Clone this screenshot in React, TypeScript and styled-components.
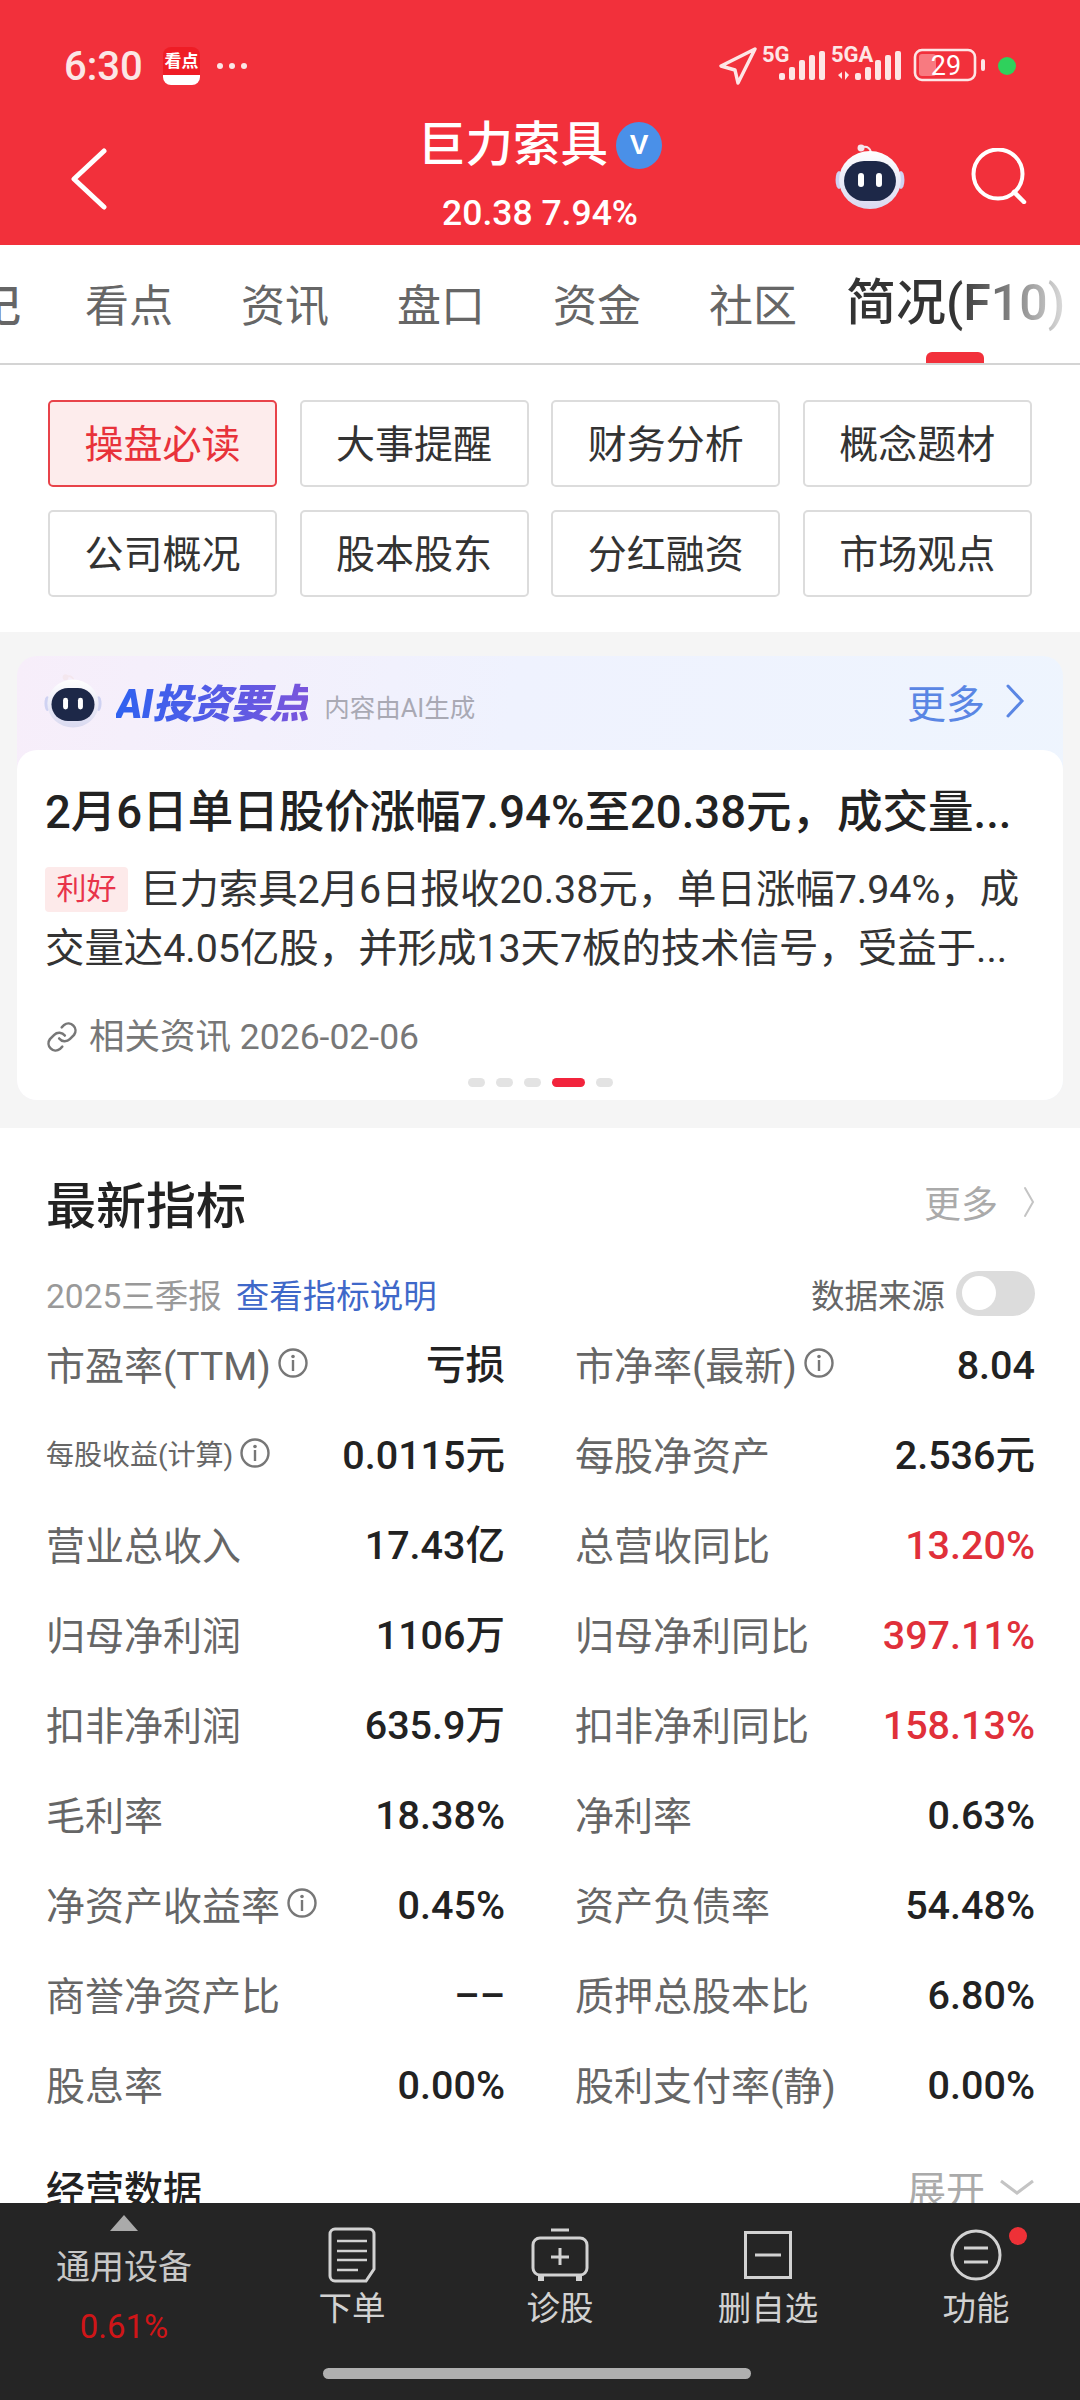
import React from "react";
import styled, { createGlobalStyle } from "styled-components";

const Global = createGlobalStyle`
  html, body { margin: 0; padding: 0; background: #fff; }
  body { font-family: Roboto, "Noto Sans CJK SC", sans-serif; }
  * { box-sizing: border-box; }
`;

const Page = styled.div`
  width: 1080px;
  height: 2400px;
  display: flex;
  flex-direction: column;
  overflow: hidden;
  background: #fff;
`;
const Header = styled.header`
  height: 245px;
  background: #f2303b;
  color: #fff;
  flex: none;
`;
const StatusBar = styled.div`
  height: 112px;
  padding: 20px 64px 0 64px;
  display: flex;
  align-items: center;
`;
const Time = styled.span`
  font-size: 40px;
  font-weight: 500;
  color: #fbe6e6;
  width: 99px;
`;
const AppBadge = styled.div`
  width: 37px;
  height: 38px;
  border-radius: 8px;
  background: linear-gradient(#ef1c25 74%, #fff 74%);
  color: #fff;
  font-size: 17px;
  font-weight: 700;
  line-height: 28px;
  text-align: center;
  overflow: hidden;
`;
const Dots = styled.span`
  margin-left: 17px;
  display: flex;
  gap: 6px;
  i { width: 6px; height: 6px; border-radius: 50%; background: #fbe6e6; display: block; }
`;
const StatusRight = styled.div`
  margin-left: auto;
  margin-right: -3px;
  display: flex;
  align-items: center;
`;
const Nav = styled.div`
  height: 133px;
  display: grid;
  grid-template-columns: 300px 1fr 300px;
  align-items: center;
`;
const BackBtn = styled.div`
  padding-left: 70px;
  display: flex;
`;
const TitleBlock = styled.div`
  display: flex;
  flex-direction: column;
  align-items: center;
  padding-top: 8px;
  height: 133px;
`;
const TitleRow = styled.div`
  height: 50px;
  display: flex;
  align-items: center;
  gap: 8px;
`;
const TitleText = styled.span`
  font-size: 47.5px;
  font-weight: 500;
  line-height: 50px;
`;
const VBadge = styled.span`
  width: 46px;
  height: 47px;
  border-radius: 50%;
  background: #4a90e8;
  color: #fff;
  font-size: 28px;
  font-weight: 900;
  text-align: center;
  line-height: 45px;
  font-family: "Liberation Sans", sans-serif;
`;
const SubTitle = styled.div`
  margin-top: 23px;
  font-size: 35.5px;
  font-weight: 500;
  line-height: 40px;
  color: #fff;
`;
const NavRight = styled.div`
  display: flex;
  justify-content: flex-end;
  align-items: center;
  padding: 0 50px 4px 0;
  gap: 65px;
`;
const Tabs = styled.nav`
  height: 120px;
  flex: none;
  border-bottom: 2px solid #d4d4d4;
  display: flex;
  align-items: center;
  overflow: hidden;
  padding-bottom: 2px;
`;
const TabItem = styled.span`
  flex: none;
  width: 88px;
  margin-right: 68px;
  font-size: 44px;
  color: #666;
  white-space: nowrap;
`;
const ClippedTab = styled(TabItem)`
  margin-left: -67px;
  margin-right: 64px;
  font-weight: 500;
`;
const ActiveTab = styled.span`
  flex: none;
  position: relative;
  margin-left: -19px;
  font-size: 50px;
  font-weight: 500;
  white-space: nowrap;
  line-height: 70px;
`;
const ActiveText = styled.span`
  background: linear-gradient(90deg, #333 50%, #999 82%, #ddd 100%);
  -webkit-background-clip: text;
  background-clip: text;
  color: transparent;
`;
const Indicator = styled.i`
  position: absolute;
  left: 80px;
  top: 84px;
  width: 58px;
  height: 11px;
  border-radius: 6px 6px 0 0;
  background: #f2303b;
`;
const Chips = styled.div`
  flex: none;
  display: grid;
  grid-template-columns: repeat(4, 229px);
  gap: 23px 22.6px;
  padding: 35px 0 35px 48px;
`;
const Chip = styled.div<{ $active?: boolean }>`
  height: 87px;
  border: 2px solid ${(p) => (p.$active ? "#e8434a" : "#dcdcdc")};
  border-radius: 5px;
  background: ${(p) => (p.$active ? "#fdecec" : "#fff")};
  color: ${(p) => (p.$active ? "#e8323a" : "#333")};
  font-size: 39px;
  padding-bottom: 5px;
  display: flex;
  align-items: center;
  justify-content: center;
`;
const Band = styled.section`
  flex: none;
  height: 496px;
  background: #f5f5f5;
  padding: 24px 17px 0;
`;
const AiCard = styled.div`
  height: 444px;
  border-radius: 20px;
  background: linear-gradient(100deg, #f7eefa 0%, #eff2fe 45%, #eef5fe 100%);
  display: flex;
  flex-direction: column;
`;
const AiHead = styled.div`
  height: 94px;
  flex: none;
  padding: 0 38px 4px 27px;
  display: flex;
  align-items: center;
`;
const AiTitle = styled.span`
  margin-left: 14px;
  font-size: 40px;
  font-weight: 900;
  font-style: italic;
  letter-spacing: -1px;
  background: linear-gradient(90deg, #2f62f0, #7a55dc);
  -webkit-background-clip: text;
  background-clip: text;
  color: transparent;
`;
const AiNote = styled.span`
  margin-left: 16px;
  margin-top: 8px;
  font-size: 25.5px;
  color: #a9a9b4;
`;
const AiMore = styled.span`
  margin-left: auto;
  font-size: 39px;
  color: #5a86e4;
  display: flex;
  align-items: center;
  gap: 20px;
`;
const AiBody = styled.div`
  flex: 1;
  background: #fff;
  border-radius: 20px;
  padding: 33px 28px 0;
  display: flex;
  flex-direction: column;
`;
const AiHeadline = styled.div`
  font-size: 45.5px;
  font-weight: 500;
  line-height: 60px;
  color: #222;
  white-space: nowrap;
`;
const AiLine = styled.div`
  font-size: 39.4px;
  line-height: 59px;
  color: #333;
  white-space: nowrap;
  display: flex;
  align-items: center;
`;
const GoodTag = styled.span`
  flex: none;
  width: 83px;
  height: 45px;
  margin-right: 12px;
  border-radius: 4px;
  background: #fdeaea;
  color: #e8344a;
  font-size: 30px;
  line-height: 43px;
  text-align: center;
`;
const AiLines = styled.div`
  margin-top: 17px;
`;
const Related = styled.div`
  margin-top: 36px;
  font-size: 35.5px;
  line-height: 46px;
  color: #777;
  display: flex;
  align-items: center;
  gap: 10px;
`;
const Pager = styled.div`
  margin-top: 18px;
  display: flex;
  justify-content: center;
  gap: 11px;
`;
const PagerDot = styled.i<{ $on?: boolean }>`
  display: block;
  width: ${(p) => (p.$on ? 33 : 17)}px;
  height: 9px;
  border-radius: 5px;
  background: ${(p) => (p.$on ? "#f2243c" : "#e3e3e3")};
`;
const Main = styled.section`
  flex: 1;
  min-height: 0;
  overflow: hidden;
  padding: 44px 45px 0 46px;
`;
const SecHead = styled.div`
  height: 60px;
  display: flex;
  align-items: center;
  justify-content: space-between;
`;
const SecTitle = styled.h2`
  margin: 0;
  font-size: 50px;
  font-weight: 500;
  color: #222;
`;
const SecMore = styled.span`
  font-size: 37px;
  color: #aaa;
  display: flex;
  align-items: center;
  gap: 25px;
`;
const MetaRow = styled.div`
  margin-top: 38px;
  height: 46px;
  display: flex;
  align-items: center;
  font-size: 33.5px;
  color: #999;
`;
const MetaLink = styled.span`
  margin-left: 14px;
  color: #3f68c9;
`;
const MetaSource = styled.span`
  margin-left: auto;
  color: #666;
`;
const Toggle = styled.span`
  margin-left: 11px;
  width: 79px;
  height: 45px;
  border-radius: 23px;
  background: #dcdcdc;
  display: flex;
  align-items: center;
  padding-left: 6px;
  i { display: block; width: 34px; height: 34px; border-radius: 50%; background: #fff; }
`;
const Metrics = styled.div`
  margin-top: 2px;
  display: grid;
  grid-template-columns: 459px 460px;
  column-gap: 70px;
  grid-auto-rows: 90px;
`;
const Metric = styled.div`
  display: flex;
  align-items: center;
  justify-content: space-between;
`;
const MetricLabel = styled.span<{ $small?: boolean }>`
  display: flex;
  align-items: center;
  gap: 6px;
  font-size: ${(p) => (p.$small ? 28 : 39)}px;
  color: #666;
  white-space: nowrap;
`;
const MetricValue = styled.span<{ $red?: boolean }>`
  font-size: 39.5px;
  line-height: 50px;
  padding-top: 6px;
  font-weight: 500;
  color: ${(p) => (p.$red ? "#e0303a" : "#222")};
  white-space: nowrap;
`;
const NextHead = styled.div`
  margin-top: 34px;
  height: 50px;
  display: flex;
  align-items: center;
  justify-content: space-between;
`;
const NextTitle = styled.span`
  font-size: 39px;
  font-weight: 500;
  color: #222;
`;
const NextMore = styled.span`
  font-size: 39px;
  color: #aaa;
  display: flex;
  align-items: center;
  gap: 14px;
`;
const Bottom = styled.footer`
  height: 197px;
  flex: none;
  background: #252525;
  display: flex;
  flex-direction: column;
  align-items: center;
`;
const BottomGrid = styled.div`
  width: 100%;
  display: grid;
  grid-template-columns: 248px repeat(4, 208px);
  height: 165px;
`;
const StockCol = styled.div`
  display: flex;
  flex-direction: column;
  align-items: center;
  padding-top: 12px;
`;
const Triangle = styled.i`
  width: 0;
  height: 0;
  border-left: 14px solid transparent;
  border-right: 14px solid transparent;
  border-bottom: 16px solid #aaa;
`;
const StockName = styled.span`
  margin-top: 14px;
  font-size: 34px;
  line-height: 44px;
  color: #c8c8c8;
`;
const StockPct = styled.span`
  margin-top: 16px;
  font-size: 33px;
  line-height: 44px;
  color: #d01518;
`;
const Tool = styled.div`
  position: relative;
  display: flex;
  flex-direction: column;
  align-items: center;
  padding-top: 24px;
`;
const ToolIcon = styled.div`
  height: 56px;
  display: flex;
  align-items: center;
  justify-content: center;
`;
const ToolLabel = styled.span`
  margin-top: 5px;
  font-size: 33.5px;
  line-height: 42px;
  color: #d2d2d2;
`;
const RedDot = styled.i`
  position: absolute;
  left: 137px;
  top: 24px;
  width: 18px;
  height: 18px;
  border-radius: 50%;
  background: #ee3137;
`;
const HomeBar = styled.div`
  width: 428px;
  height: 11px;
  margin-right: 6px;
  border-radius: 6px;
  background: #b0b0b0;
`;

const Robot = ({ size, id }: { size: number; id: string }) => (
  <svg width={size} height={size * 0.97} viewBox="0 0 70 68">
    <defs>
      <linearGradient id={id} x1="0" y1="0" x2="0" y2="1">
        <stop offset="0" stopColor="#ffffff" />
        <stop offset="1" stopColor="#d9d9f0" />
      </linearGradient>
    </defs>
    <circle cx="26" cy="5" r="3.5" fill="#f4e7ee" />
    <path d="M28 4 C33 3 35 6 36 9" stroke="#f4e7ee" strokeWidth="2" fill="none" />
    <ellipse cx="4" cy="37" rx="3.5" ry="9" fill="#cfd2f2" />
    <ellipse cx="66" cy="37" rx="3.5" ry="9" fill="#cfd2f2" />
    <ellipse cx="35" cy="37" rx="31" ry="29" fill={`url(#${id})`} />
    <rect x="9" y="18" width="52" height="40" rx="20" fill="#1d2848" />
    <rect x="23" y="30" width="6" height="14" rx="3" fill="#fff" />
    <rect x="41" y="30" width="6" height="14" rx="3" fill="#fff" />
  </svg>
);

const Info = () => (
  <svg width="32" height="32" viewBox="0 0 32 32">
    <circle cx="16" cy="16" r="13.5" fill="none" stroke="#777" strokeWidth="2.4" />
    <circle cx="16" cy="9.5" r="1.8" fill="#777" />
    <rect x="14.8" y="13" width="2.4" height="11" fill="#777" />
  </svg>
);

const Chevron = ({ w, h, c, sw }: { w: number; h: number; c: string; sw: number }) => (
  <svg width={w} height={h} viewBox={`0 0 ${w} ${h}`}>
    <path d={`M${sw} ${sw} L${w - sw} ${h / 2} L${sw} ${h - sw}`} fill="none" stroke={c} strokeWidth={sw} strokeLinecap="round" />
  </svg>
);

const StatusIcons = () => (
  <svg width="300" height="68" viewBox="0 -8 300 68" fontFamily="Roboto, sans-serif">
    <path d="M36 9 L2 26 L16 30 L19 43 Z" fill="none" stroke="#fde6e6" strokeWidth="3.4" strokeLinejoin="round" />
    <text x="43" y="22" fontSize="22" fontWeight="700" fill="#fde6e6">5G</text>
    <g fill="#fde6e6">
      <rect x="60" y="33" width="6" height="7" rx="2" />
      <rect x="70" y="27" width="6" height="13" rx="2" />
      <rect x="80" y="20" width="6" height="20" rx="2" />
      <rect x="90" y="15" width="6" height="25" rx="2" />
      <rect x="100" y="11" width="6" height="29" rx="2" />
      <path d="M119 35 l4 -3 v7 z M126 31 l4 4 -4 5 z" />
      <rect x="136" y="33" width="6" height="7" rx="2" />
      <rect x="146" y="27" width="6" height="13" rx="2" />
      <rect x="156" y="20" width="6" height="20" rx="2" />
      <rect x="166" y="15" width="6" height="25" rx="2" />
      <rect x="176" y="11" width="6" height="29" rx="2" />
    </g>
    <text x="112" y="22" fontSize="22" fontWeight="700" fill="#fde6e6">5GA</text>
    <rect x="196" y="10" width="60" height="30" rx="7" fill="none" stroke="#fde6e6" strokeWidth="2.6" />
    <rect x="200" y="14" width="17" height="22" rx="3" fill="#f87a80" />
    <text x="227" y="35" fontSize="27" textAnchor="middle" fill="#fff">29</text>
    <rect x="262" y="19" width="4" height="12" rx="2" fill="#fde6e6" />
    <circle cx="288" cy="26" r="9" fill="#2fd15c" />
  </svg>
);

type Cell = { label: string; value: string; red?: boolean; info?: boolean; small?: boolean };
const cells: Cell[] = [
  { label: "市盈率(TTM)", value: "亏损", info: true },
  { label: "市净率(最新)", value: "8.04", info: true },
  { label: "每股收益(计算)", value: "0.0115元", info: true, small: true },
  { label: "每股净资产", value: "2.536元" },
  { label: "营业总收入", value: "17.43亿" },
  { label: "总营收同比", value: "13.20%", red: true },
  { label: "归母净利润", value: "1106万" },
  { label: "归母净利同比", value: "397.11%", red: true },
  { label: "扣非净利润", value: "635.9万" },
  { label: "扣非净利同比", value: "158.13%", red: true },
  { label: "毛利率", value: "18.38%" },
  { label: "净利率", value: "0.63%" },
  { label: "净资产收益率", value: "0.45%", info: true },
  { label: "资产负债率", value: "54.48%" },
  { label: "商誉净资产比", value: "––" },
  { label: "质押总股本比", value: "6.80%" },
  { label: "股息率", value: "0.00%" },
  { label: "股利支付率(静)", value: "0.00%" },
];

const chips = ["操盘必读", "大事提醒", "财务分析", "概念题材", "公司概况", "股本股东", "分红融资", "市场观点"];
const tabs = ["看点", "资讯", "盘口", "资金", "社区"];

export default function App() {
  return (
    <Page>
      <Global />
      <Header>
        <StatusBar>
          <Time>6:30</Time>
          <AppBadge>看点</AppBadge>
          <Dots><i /><i /><i /></Dots>
          <StatusRight><StatusIcons /></StatusRight>
        </StatusBar>
        <Nav>
          <BackBtn>
            <svg width="38" height="62" viewBox="0 0 38 62">
              <path d="M34 3 L4 31 L34 59" fill="none" stroke="#fff" strokeWidth="5" strokeLinecap="round" strokeLinejoin="round" />
            </svg>
          </BackBtn>
          <TitleBlock>
            <TitleRow>
              <TitleText>巨力索具</TitleText>
              <VBadge>V</VBadge>
            </TitleRow>
            <SubTitle>20.38 7.94%</SubTitle>
          </TitleBlock>
          <NavRight>
            <Robot size={70} id="robot-nav" />
            <svg width="60" height="56" viewBox="0 0 60 56">
              <circle cx="28" cy="26" r="24.5" fill="none" stroke="#fff" strokeWidth="4" />
              <path d="M44 44 L54 54" stroke="#fff" strokeWidth="4.5" strokeLinecap="round" />
            </svg>
          </NavRight>
        </Nav>
      </Header>

      <Tabs>
        <ClippedTab>笔记</ClippedTab>
        {tabs.map((t) => <TabItem key={t}>{t}</TabItem>)}
        <ActiveTab><ActiveText>简况(F10)</ActiveText><Indicator /></ActiveTab>
      </Tabs>

      <Chips>
        {chips.map((c, i) => <Chip key={c} $active={i === 0}>{c}</Chip>)}
      </Chips>

      <Band>
        <AiCard>
          <AiHead>
            <Robot size={58} id="robot-card" />
            <AiTitle>AI投资要点</AiTitle>
            <AiNote>内容由AI生成</AiNote>
            <AiMore>更多<Chevron w={20} h={36} c="#5a86e4" sw={3} /></AiMore>
          </AiHead>
          <AiBody>
            <AiHeadline>2月6日单日股价涨幅7.94%至20.38元，成交量...</AiHeadline>
            <AiLines>
              <AiLine><GoodTag>利好</GoodTag>巨力索具2月6日报收20.38元，单日涨幅7.94%，成</AiLine>
              <AiLine>交量达4.05亿股，并形成13天7板的技术信号，受益于...</AiLine>
            </AiLines>
            <Related>
              <svg width="34" height="34" viewBox="0 0 24 24" fill="none" stroke="#777" strokeWidth="1.8" strokeLinecap="round">
                <path d="M10 13a5 5 0 0 0 7.5.5l3-3a5 5 0 0 0-7-7l-1.7 1.7" />
                <path d="M14 11a5 5 0 0 0-7.5-.5l-3 3a5 5 0 0 0 7 7l1.7-1.7" />
              </svg>
              相关资讯 2026-02-06
            </Related>
            <Pager>
              <PagerDot /><PagerDot /><PagerDot /><PagerDot $on /><PagerDot />
            </Pager>
          </AiBody>
        </AiCard>
      </Band>

      <Main>
        <SecHead>
          <SecTitle>最新指标</SecTitle>
          <SecMore>更多<Chevron w={12} h={32} c="#c4c4c4" sw={2} /></SecMore>
        </SecHead>
        <MetaRow>
          2025三季报
          <MetaLink>查看指标说明</MetaLink>
          <MetaSource>数据来源</MetaSource>
          <Toggle><i /></Toggle>
        </MetaRow>
        <Metrics>
          {cells.map((c) => (
            <Metric key={c.label}>
              <MetricLabel $small={c.small}>{c.label}{c.info && <Info />}</MetricLabel>
              <MetricValue $red={c.red}>{c.value}</MetricValue>
            </Metric>
          ))}
        </Metrics>
        <NextHead>
          <NextTitle>经营数据</NextTitle>
          <NextMore>
            展开
            <svg width="36" height="16" viewBox="0 0 36 16">
              <path d="M2 2 L18 14 L34 2" fill="none" stroke="#c4c4c4" strokeWidth="3" />
            </svg>
          </NextMore>
        </NextHead>
      </Main>

      <Bottom>
        <BottomGrid>
          <StockCol>
            <Triangle />
            <StockName>通用设备</StockName>
            <StockPct>0.61%</StockPct>
          </StockCol>
          <Tool>
            <ToolIcon>
              <svg width="48" height="56" viewBox="0 0 48 56" fill="none" stroke="#d2d2d2" strokeWidth="3">
                <path d="M7 2 H41 A5 5 0 0 1 46 7 V42 L38 54 H7 A5 5 0 0 1 2 49 V7 A5 5 0 0 1 7 2 Z" />
                <path d="M9 14 H39 M9 24 H39 M9 33 H39 M9 43 H30" strokeWidth="2.6" />
              </svg>
            </ToolIcon>
            <ToolLabel>下单</ToolLabel>
          </Tool>
          <Tool>
            <ToolIcon>
              <svg width="58" height="54" viewBox="0 0 58 54" fill="none" stroke="#d2d2d2" strokeWidth="3">
                <path d="M20 2 H38" />
                <rect x="2" y="10" width="54" height="37" rx="7" />
                <path d="M29 20 V37 M20 29 H38" />
                <path d="M10 48 V53 M48 48 V53" strokeWidth="6" />
              </svg>
            </ToolIcon>
            <ToolLabel>诊股</ToolLabel>
          </Tool>
          <Tool>
            <ToolIcon>
              <svg width="48" height="48" viewBox="0 0 48 48" fill="none" stroke="#d2d2d2" strokeWidth="3">
                <rect x="1.5" y="1.5" width="45" height="45" />
                <path d="M11 24 H37" />
              </svg>
            </ToolIcon>
            <ToolLabel>删自选</ToolLabel>
          </Tool>
          <Tool>
            <ToolIcon>
              <svg width="52" height="52" viewBox="0 0 52 52" fill="none" stroke="#d2d2d2" strokeWidth="3">
                <circle cx="26" cy="26" r="24" />
                <path d="M14 19 H38 M14 33 H38" />
              </svg>
            </ToolIcon>
            <ToolLabel>功能</ToolLabel>
            <RedDot />
          </Tool>
        </BottomGrid>
        <HomeBar />
      </Bottom>
    </Page>
  );
}
